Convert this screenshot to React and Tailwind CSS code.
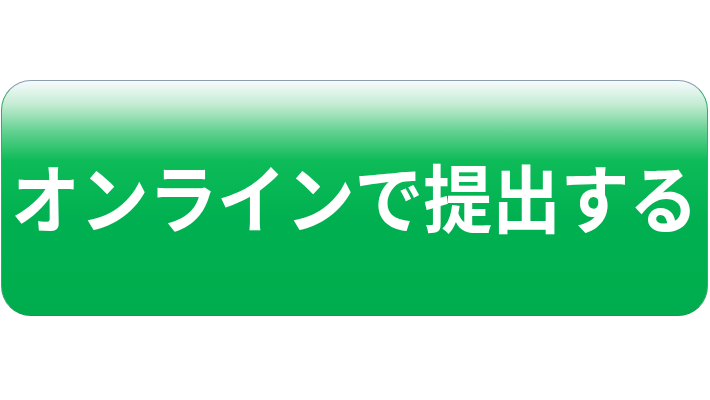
export default function App() {
  return (
    <div className="w-[710px] h-[400px] bg-white pt-[80px] pl-px">
      <button
        type="button"
        className="w-[707px] h-[236px] rounded-[30px] border border-[#8c9db0] border-b-[#0f9a4c] border-l-[#3aa870] border-r-[#3aa870] bg-[linear-gradient(to_bottom,#f7fbfd_0%,#c4ecd3_10%,#5fd08e_22%,#0dbb58_34%,#00b050_60%,#00ad4e_100%)] flex items-center justify-center"
      >
        <span
          className="inline-block text-white font-bold text-[69px] leading-none tracking-[-0.3px] -mt-[6px] scale-y-[1.07] whitespace-nowrap"
          style={{ fontFamily: '"Noto Sans CJK JP", "Noto Sans", sans-serif' }}
        >
          オンラインで提出する
        </span>
      </button>
    </div>
  );
}
